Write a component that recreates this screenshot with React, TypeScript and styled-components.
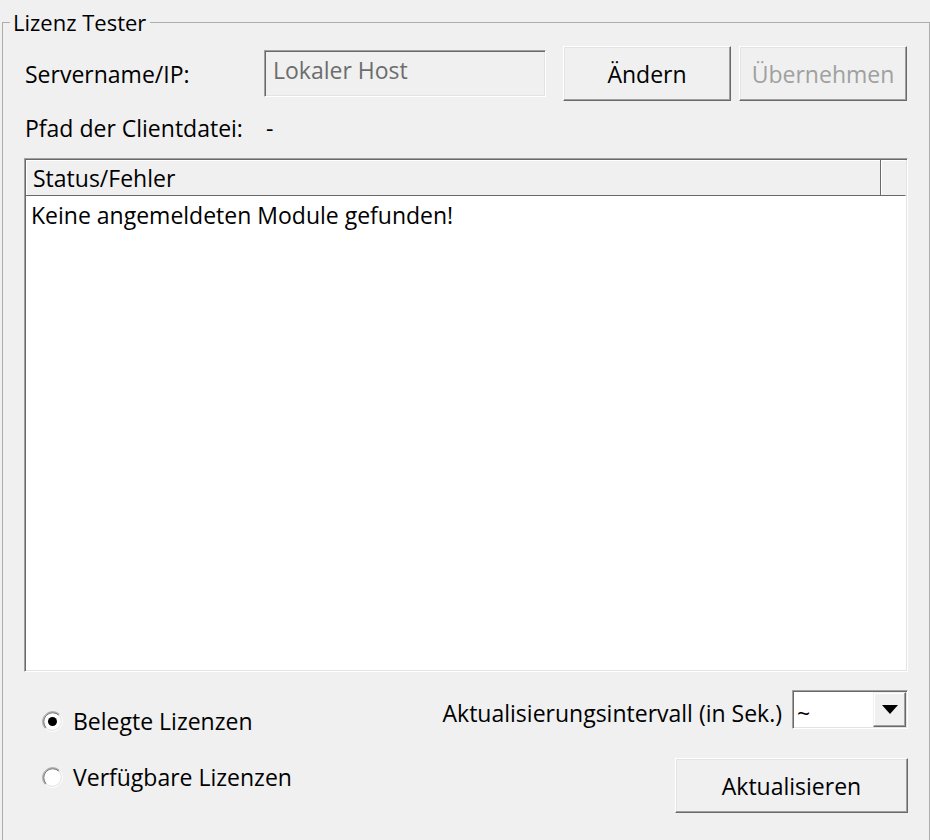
import React from 'react';
import styled, { createGlobalStyle } from 'styled-components';

const GlobalStyle = createGlobalStyle`
  html, body {
    margin: 0;
    padding: 0;
    height: 840px;
    overflow: hidden;
    background: #f0f0f0;
  }
  body {
    font-family: 'Open Sans', 'Noto Sans', 'DejaVu Sans', sans-serif;
    font-size: 23px;
    color: #000;
  }
`;

const Page = styled.div`
  padding-top: 8px;
  width: 930px;
  height: 840px;
  box-sizing: border-box;
`;

const Group = styled.fieldset`
  margin: 0 0 0 2px;
  padding: 0;
  width: 928px;
  height: 850px;
  box-sizing: border-box;
  border: 1px solid #adadad;
  border-bottom: none;
  min-inline-size: 0;
`;

const Legend = styled.legend`
  margin-left: 7px;
  padding: 0 4px 0 3px;
  line-height: 28px;
  height: 28px;
  font-size: 22px;
`;

const Body = styled.div`
  padding: 10px 21px 0 21px;
  display: flex;
  flex-direction: column;
`;

const ServerRow = styled.div`
  display: flex;
  align-items: center;
  height: 55px;
`;

const Label = styled.span<{ $width?: number }>`
  width: ${(p) => (p.$width ? `${p.$width}px` : 'auto')};
  padding-left: 1px;
  line-height: 28px;
  flex-shrink: 0;
  white-space: nowrap;
`;

const TextBox = styled.div`
  width: 282px;
  height: 47px;
  box-sizing: border-box;
  border: 1px solid;
  border-color: #a0a0a0 #fff #fff #a0a0a0;
  box-shadow: inset 1px 1px #696969, inset -1px -1px #e3e3e3;
  padding: 3px 0 0 8px;
  color: #6d6d6d;
  line-height: 32px;
  white-space: nowrap;
`;

const Button = styled.button<{ $width: number }>`
  width: ${(p) => p.$width}px;
  height: 55px;
  box-sizing: border-box;
  background: #f0f0f0;
  font: inherit;
  color: ${(p) => (p.disabled ? '#a0a0a0' : '#000')};
  border: 1px solid;
  border-color: #fff #696969 #696969 #fff;
  box-shadow: inset -1px -1px #a0a0a0, inset 1px 1px #e3e3e3;
  padding: 0;
  cursor: default;
  white-space: nowrap;
`;

const ButtonGap = styled.div<{ $w: number }>`
  width: ${(p) => p.$w}px;
  flex-shrink: 0;
`;

const PathRow = styled.div`
  display: flex;
  margin-top: 13px;
  height: 28px;
  align-items: center;
`;

const ListView = styled.div`
  margin-top: 16px;
  height: 514px;
  box-sizing: border-box;
  border: 1px solid;
  border-color: #a0a0a0 #fff #fff #a0a0a0;
  box-shadow: inset 1px 1px #696969, inset -1px -1px #e3e3e3;
  padding: 1px;
  display: flex;
  flex-direction: column;
  background: #fff;
`;

const HeaderRow = styled.div`
  display: flex;
  height: 36px;
  flex-shrink: 0;
`;

const HeaderCell = styled.div<{ $grow?: boolean }>`
  flex: ${(p) => (p.$grow ? '1 1 auto' : '0 0 25px')};
  box-sizing: border-box;
  background: #f0f0f0;
  border-bottom: 1px solid #696969;
  border-right: 1px solid ${(p) => (p.$grow ? '#696969' : '#f0f0f0')};
  box-shadow: inset 1px 1px #fff;
  padding-left: 7px;
  line-height: 37px;
  white-space: nowrap;
`;

const ListBody = styled.div`
  flex: 1;
  padding: 5px 0 0 5px;
  line-height: 28px;
`;

const Bottom = styled.div`
  display: flex;
  justify-content: space-between;
  margin-top: 18px;
`;

const RadioColumn = styled.div`
  display: flex;
  flex-direction: column;
  gap: 28px;
  padding: 17px 0 0 18px;
`;

const RadioRow = styled.label`
  display: flex;
  align-items: center;
  gap: 10px;
  height: 28px;
  line-height: 28px;
`;

const ControlColumn = styled.div`
  display: flex;
  flex-direction: column;
  align-items: flex-end;
  gap: 29px;
`;

const IntervalRow = styled.div`
  display: flex;
  align-items: center;
  gap: 10px;
`;

const IntervalLabel = styled.span`
  padding-top: 6px;
  line-height: 28px;
  white-space: nowrap;
`;

const Combo = styled.div`
  width: 116px;
  height: 39px;
  box-sizing: border-box;
  border: 1px solid;
  border-color: #a0a0a0 #fff #fff #a0a0a0;
  box-shadow: inset 1px 1px #696969, inset -1px -1px #e3e3e3;
  background: #fff;
  display: flex;
  align-items: stretch;
  padding: 1px;
`;

const ComboText = styled.div`
  flex: 1;
  padding: 8px 0 0 3px;
  line-height: 26px;
`;

const ComboButton = styled.div`
  width: 33px;
  box-sizing: border-box;
  background: #f0f0f0;
  border: 1px solid;
  border-color: #f0f0f0 #696969 #696969 #f0f0f0;
  box-shadow: inset -1px -1px #a0a0a0, inset 1px 1px #fff;
  display: flex;
  align-items: center;
  justify-content: center;
`;

const Radio = ({ checked }: { checked?: boolean }) => (
  <svg width="21" height="21" viewBox="0 0 21 21">
    <circle cx="10.5" cy="10.5" r="9" fill="#fff" />
    <path d="M3.43 17.57 A10 10 0 0 1 17.57 3.43" fill="none" stroke="#a0a0a0" strokeWidth="1" />
    <path d="M17.57 3.43 A10 10 0 0 1 3.43 17.57" fill="none" stroke="#fff" strokeWidth="1" />
    <path d="M4.14 16.86 A9 9 0 0 1 16.86 4.14" fill="none" stroke="#696969" strokeWidth="1" />
    <path d="M16.86 4.14 A9 9 0 0 1 4.14 16.86" fill="none" stroke="#e3e3e3" strokeWidth="1" />
    {checked && <circle cx="10.5" cy="10.5" r="4.5" fill="#000" />}
  </svg>
);

export default function App() {
  return (
    <Page>
      <GlobalStyle />
      <Group>
        <Legend>Lizenz Tester</Legend>
        <Body>
          <ServerRow>
            <Label $width={239}>Servername/IP:</Label>
            <TextBox>Lokaler Host</TextBox>
            <ButtonGap $w={17} />
            <Button $width={168}>Ändern</Button>
            <ButtonGap $w={8} />
            <Button $width={168} disabled>
              Übernehmen
            </Button>
          </ServerRow>
          <PathRow>
            <Label $width={240}>Pfad der Clientdatei:</Label>
            <Label>-</Label>
          </PathRow>
          <ListView>
            <HeaderRow>
              <HeaderCell $grow>Status/Fehler</HeaderCell>
              <HeaderCell />
            </HeaderRow>
            <ListBody>Keine angemeldeten Module gefunden!</ListBody>
          </ListView>
          <Bottom>
            <RadioColumn>
              <RadioRow>
                <Radio checked />
                Belegte Lizenzen
              </RadioRow>
              <RadioRow>
                <Radio />
                Verfügbare Lizenzen
              </RadioRow>
            </RadioColumn>
            <ControlColumn>
              <IntervalRow>
                <IntervalLabel>Aktualisierungsintervall (in Sek.)</IntervalLabel>
                <Combo>
                  <ComboText>~</ComboText>
                  <ComboButton>
                    <svg width="16" height="9" viewBox="0 0 16 9">
                      <path d="M0 0 H16 L8 9 Z" fill="#000" />
                    </svg>
                  </ComboButton>
                </Combo>
              </IntervalRow>
              <Button $width={233}>Aktualisieren</Button>
            </ControlColumn>
          </Bottom>
        </Body>
      </Group>
    </Page>
  );
}
